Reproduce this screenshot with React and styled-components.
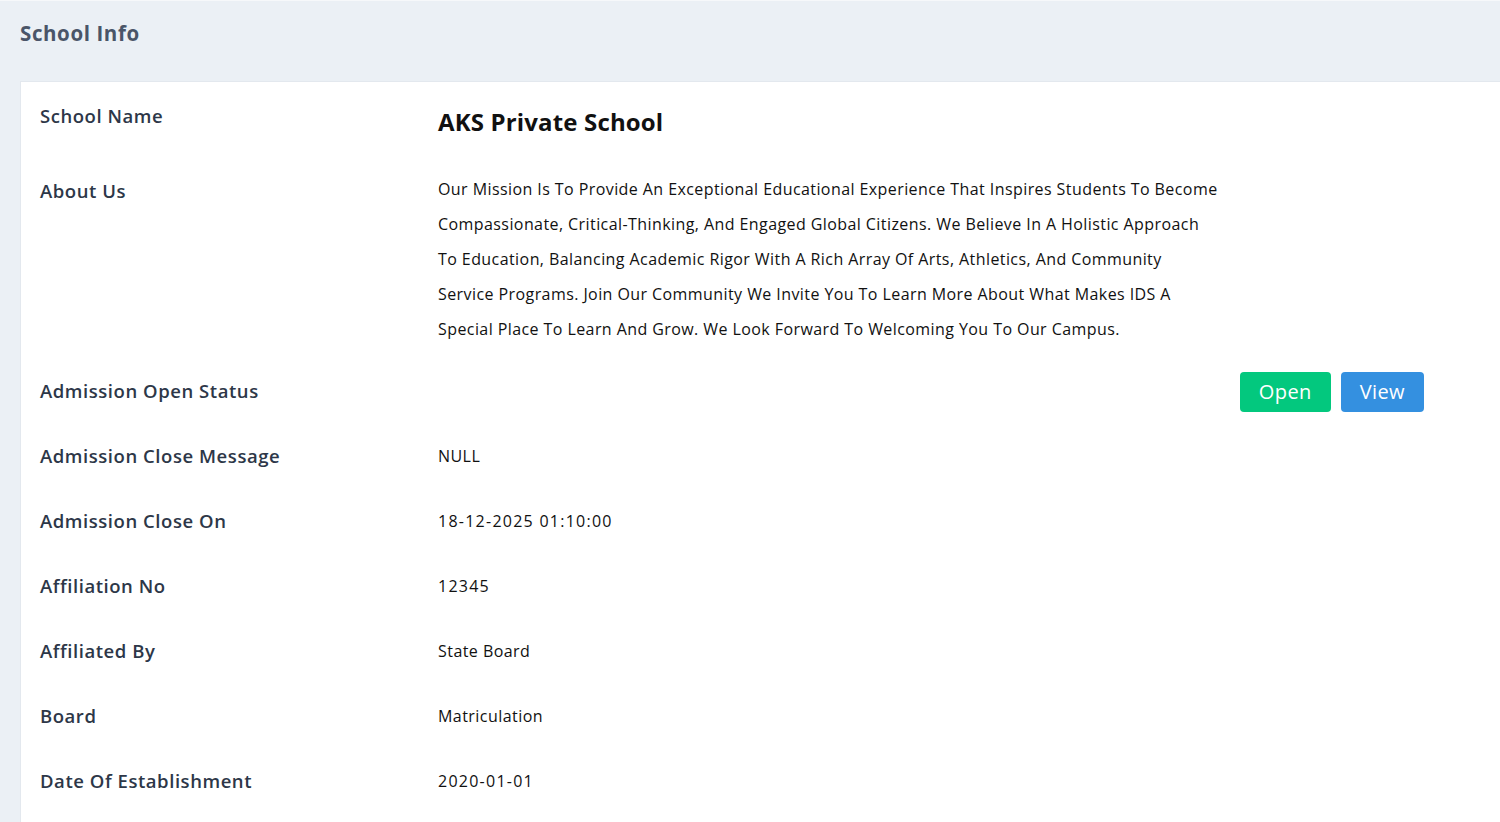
import React from "react";
import styled, { createGlobalStyle } from "styled-components";

const GlobalStyle = createGlobalStyle`
  html, body { margin: 0; padding: 0; }
  body {
    font-family: "Open Sans", "Noto Sans", sans-serif;
    background: #ebf0f5;
  }
  * { box-sizing: border-box; }
`;

const Page = styled.div`
  min-height: 100vh;
  background: #ebf0f5;
  border-top: 1px solid #f6f8fa;
`;

const Header = styled.header`
  height: 80px;
  padding: 19px 20px 0;
`;

const Title = styled.h2`
  margin: 0;
  font-size: 20.5px;
  line-height: 27px;
  font-weight: 700;
  letter-spacing: 0.6px;
  color: #4a5568;
`;

const Card = styled.section`
  margin-left: 20px;
  background: #ffffff;
  border-top: 1px solid #e3e8ee;
  border-left: 1px solid #e3e8ee;
  padding: 1px 0 0 19px;
  min-height: 741px;
`;

const Row = styled.div`
  display: grid;
  grid-template-columns: 398px 1fr;
  padding: 20px 0;
  align-items: start;
`;

const Label = styled.div`
  font-size: 18.5px;
  line-height: 25px;
  font-weight: 600;
  letter-spacing: 0.55px;
  color: #2d3748;
`;

const Value = styled.div`
  font-size: 16px;
  line-height: 25px;
  letter-spacing: ${(p) => (p.$numeric ? "1.25px" : "0.45px")};
  color: #111111;
  margin-top: 1px;
  margin-bottom: -1px;
`;

const SchoolName = styled.div`
  font-size: 24px;
  line-height: 35px;
  font-weight: 700;
  letter-spacing: 0.15px;
  color: #111111;
  margin-top: 1px;
  margin-bottom: -1px;
`;

const About = styled.p`
  margin: -6px 0 -9px;
  max-width: 781px;
  font-size: 16px;
  line-height: 35px;
  letter-spacing: 0.42px;
  color: #111111;
`;

const Actions = styled.div`
  display: flex;
  justify-content: flex-end;
  gap: 10px;
  margin: -6px 0 -9px;
  padding-right: 76px;
`;

const Button = styled.button`
  height: 40px;
  padding: 0 19px;
  border: none;
  border-radius: 4px;
  font-family: inherit;
  font-size: 20px;
  line-height: 40px;
  letter-spacing: 0.4px;
  color: #ffffff;
  background: ${(p) => (p.$variant === "success" ? "#03c87e" : "#3490e0")};
  cursor: pointer;
`;

const details = [
  ["Admission Close Message", "NULL", false],
  ["Admission Close On", "18-12-2025 01:10:00", true],
  ["Affiliation No", "12345", true],
  ["Affiliated By", "State Board", false],
  ["Board", "Matriculation", false],
  ["Date Of Establishment", "2020-01-01", true],
];

export default function App() {
  return (
    <>
      <GlobalStyle />
      <Page>
        <Header>
          <Title>School Info</Title>
        </Header>
        <Card>
          <Row>
            <Label>School Name</Label>
            <SchoolName>AKS Private School</SchoolName>
          </Row>
          <Row>
            <Label>About Us</Label>
            <About>
              Our Mission Is To Provide An Exceptional Educational Experience That Inspires Students To Become
              Compassionate, Critical-Thinking, And Engaged Global Citizens. We Believe In A Holistic Approach
              To Education, Balancing Academic Rigor With A Rich Array Of Arts, Athletics, And Community
              Service Programs. Join Our Community We Invite You To Learn More About What Makes IDS A
              Special Place To Learn And Grow. We Look Forward To Welcoming You To Our Campus.
            </About>
          </Row>
          <Row>
            <Label>Admission Open Status</Label>
            <Actions>
              <Button $variant="success">Open</Button>
              <Button $variant="primary">View</Button>
            </Actions>
          </Row>
          {details.map(([label, value, numeric]) => (
            <Row key={label}>
              <Label>{label}</Label>
              <Value $numeric={numeric}>{value}</Value>
            </Row>
          ))}
        </Card>
      </Page>
    </>
  );
}
